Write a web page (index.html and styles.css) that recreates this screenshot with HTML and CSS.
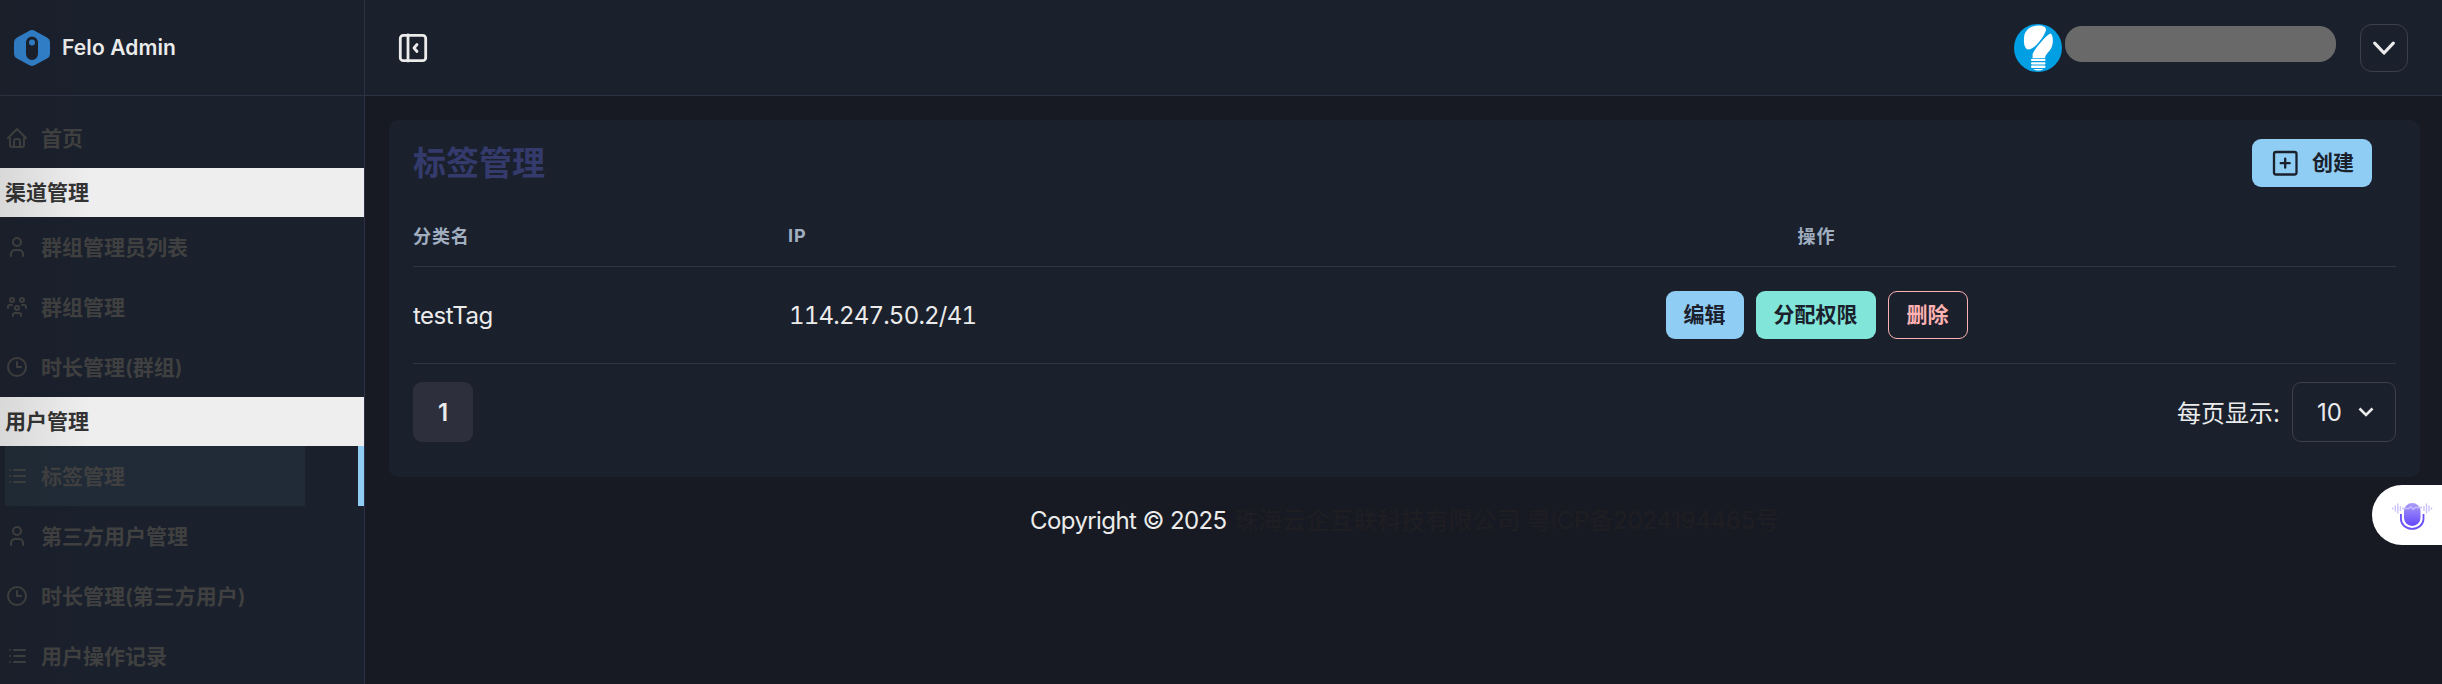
FILE: index.html
```html
<!DOCTYPE html>
<html lang="zh-CN">
<head>
<meta charset="utf-8">
<title>Felo Admin</title>
<link rel="stylesheet" href="styles.css">
</head>
<body>
<svg width="0" height="0" class="defs">
  <symbol id="i-home" viewBox="0 0 24 24"><path d="M5 12H3l9-9 9 9h-2M5 12v7a2 2 0 0 0 2 2h10a2 2 0 0 0 2-2v-7M9 21v-6a2 2 0 0 1 2-2h2a2 2 0 0 1 2 2v6"/></symbol>
  <symbol id="i-user" viewBox="0 0 24 24"><circle cx="12" cy="7" r="4"/><path d="M6 21v-2a4 4 0 0 1 4-4h4a4 4 0 0 1 4 4v2"/></symbol>
  <symbol id="i-users" viewBox="0 0 24 24"><circle cx="12" cy="13" r="2"/><path d="M8 21v-1a2 2 0 0 1 2-2h4a2 2 0 0 1 2 2v1M17 10h2a2 2 0 0 1 2 2v1M3 13v-1a2 2 0 0 1 2-2h2"/><circle cx="17" cy="5" r="2"/><circle cx="7" cy="5" r="2"/></symbol>
  <symbol id="i-clock" viewBox="0 0 24 24"><circle cx="12" cy="12" r="9"/><path d="M12 7v5h4"/></symbol>
  <symbol id="i-list" viewBox="0 0 24 24"><path d="M9 6h11M9 12h11M9 18h11M5 6v.01M5 12v.01M5 18v.01"/></symbol>
</svg>
<div class="app">
  <aside class="sidebar">
    <div class="brand">
      <svg class="logo" viewBox="0 0 36 36"><path fill="#3182ce" fill-rule="evenodd" d="M14.500 1.200Q18-1 21.500 1.200L33 7.500Q36 9.200 36 12V24Q36 26.800 33 28.500L21.500 34.800Q18 37 14.500 34.800L3 28.500Q0 26.800 0 24V12Q0 9.200 3 7.500ZM18 6.500A6 6 0 0 0 12 12.500V24A6 6 0 0 0 24 24V12.500A6 6 0 0 0 18 6.500Z"/><circle cx="18" cy="12.500" r="3" fill="#3182ce"/></svg>
      <span>Felo Admin</span>
    </div>
    <nav class="menu">
      <a class="item"><svg><use href="#i-home"/></svg><span>首页</span></a>
      <div class="section">渠道管理</div>
      <a class="item"><svg><use href="#i-user"/></svg><span>群组管理员列表</span></a>
      <a class="item"><svg><use href="#i-users"/></svg><span>群组管理</span></a>
      <a class="item"><svg><use href="#i-clock"/></svg><span>时长管理(群组)</span></a>
      <div class="section">用户管理</div>
      <a class="item active"><svg><use href="#i-list"/></svg><span>标签管理</span></a>
      <a class="item"><svg><use href="#i-user"/></svg><span>第三方用户管理</span></a>
      <a class="item"><svg><use href="#i-clock"/></svg><span>时长管理(第三方用户)</span></a>
      <a class="item"><svg><use href="#i-list"/></svg><span>用户操作记录</span></a>
    </nav>
    <div class="edge-shade"></div>
  </aside>
  <div class="content">
    <header class="topbar">
      <svg class="toggle" viewBox="0 0 36 36"><rect x="5.300" y="5.300" width="25.400" height="25.400" rx="3"/><path d="M13 5v26M22 14.500L19 18l3 3.500"/></svg>
      <div class="account">
        <svg class="avatar" viewBox="0 0 48 48"><circle cx="24" cy="24" r="24" fill="#009fe3"/><g fill="#fff"><path d="M10 14.500C10 6 17 1.500 24.500 1.500C29.500 1.500 32 3.500 32 5.500C32 10 21 25.500 14.500 25.500C11 25.500 9.500 20 10 14.500Z"/><path d="M36.800 9.500C39.500 12 39.500 20 37 24.500C34.500 28.500 31.500 30.500 31 34H18.500C19 31 17.500 31 20.500 26.500C23 22.500 32.500 10.500 36.800 9.500Z"/><rect x="17" y="34.800" width="14.500" height="2.300" rx="1"/><rect x="17" y="38.200" width="14.500" height="2.300" rx="1"/><rect x="17" y="41.600" width="14.500" height="2.300" rx="1"/><path d="M19 45h10.500q-5 3-10.500 0"/></g></svg>
        <span class="account-name"></span>
        <button class="square"><svg viewBox="0 0 24 24"><path d="M4 7.800l8 8.500 8-8.500"/></svg></button>
      </div>
    </header>
    <main class="main">
      <section class="card">
        <div class="card-head">
          <h1>标签管理</h1>
          <button class="btn blue create"><svg viewBox="0 0 30 30"><rect x="4" y="4" width="22.500" height="22.500" rx="2"/><path d="M15.200 10.700v9M10.700 15.200h9"/></svg>创建</button>
        </div>
        <div class="table">
          <div class="row head"><span>分类名</span><span>IP</span><span class="ops">操作</span></div>
          <div class="row body"><span class="tag">testTag</span><span class="ip">114.247.50.2/41</span>
            <div class="ops"><button class="btn blue w78">编辑</button><button class="btn teal w120">分配权限</button><button class="btn red w80">删除</button></div>
          </div>
        </div>
        <div class="pager">
          <button class="page">1</button>
          <div class="size"><span>每页显示:</span><div class="select"><span>10</span><svg viewBox="0 0 16 12"><path d="M1.500 2.500L8 9l6.500-6.500"/></svg></div></div>
        </div>
      </section>
      <footer class="footer"><span class="copy">Copyright © 2025</span><span class="dim">珠海云企互联科技有限公司 粤ICP备2024194465号</span></footer>
    </main>
  </div>
</div>
<div class="fab">
  <svg viewBox="0 0 42 30">
    <defs><linearGradient id="mic" x1="0" y1="0" x2="0" y2="1"><stop offset="0" stop-color="#a99bf8"/><stop offset="1" stop-color="#6547fb"/></linearGradient></defs>
    <rect x="13" y="2" width="16.500" height="23" rx="8.200" fill="url(#mic)"/>
    <path d="M9.900 13v5a11.200 9.800 0 0 0 22.600 0v-5" fill="none" stroke="#6a4ff7" stroke-width="1.800"/>
    <path d="M1.800 6.500v2M4.300 4.500v6M6.800 2.500v10M9.300 5v5M33 5v5M35.500 2.500v10M38 4.500v6M40.500 6.500v2M11 7.500h7l2-2 2 3 2-2h7" fill="none" stroke="#c9bdfb" stroke-width="1.300"/>
  </svg>
</div>
</body>
</html>
```
FILE: styles.css
```css
* { box-sizing: border-box; }
body { margin: 0; height: 684px; overflow: hidden; background: #181a23; color: #ebebeb; font-family: Inter, "Noto Sans CJK SC", sans-serif; font-size: 24px; }
h1 { margin: 0; }
button { font: inherit; color: inherit; background: none; border: 0; padding: 0; }
.defs { position: absolute; }
.app { display: flex; height: 684px; }

.sidebar { position: relative; width: 365px; flex: none; background: #1a202c; border-right: 1px solid #2d3345; overflow: hidden; }
.brand { height: 96px; border-bottom: 1px solid #2d3345; display: flex; align-items: center; gap: 12px; padding-left: 14px; font-size: 21px; font-weight: 600; letter-spacing: .1px; }
.logo { width: 36px; height: 36px; }
.menu { padding-top: 12px; font-size: 21px; font-weight: 600; }
.item { display: flex; align-items: center; gap: 12px; height: 60px; margin-left: 5px; color: #404040; }
.item span { padding-bottom: 3px; }
.item svg { width: 24px; height: 24px; fill: none; stroke: currentColor; stroke-width: 2; stroke-linecap: round; stroke-linejoin: round; }
.item.active { background: linear-gradient(90deg, #202b37 300px, transparent 300px); border-right: 6px solid #90cdf4; }
.section { height: 49px; line-height: 49px; padding-left: 5px; background: #eee; color: #333; }
.edge-shade { position: absolute; inset: 0 auto 0 0; width: 90px; background: linear-gradient(90deg, rgba(26, 26, 26, .1), transparent); }

.content { flex: 1; min-width: 0; }
.topbar { height: 96px; background: #1a202c; border-bottom: 1px solid #2d3345; display: flex; align-items: center; justify-content: space-between; padding: 0 34px 0 30px; }
.toggle { width: 36px; height: 36px; fill: none; stroke: #ebebeb; stroke-width: 2.8; stroke-linecap: round; stroke-linejoin: round; }
.account { display: flex; align-items: center; }
.avatar { width: 48px; height: 48px; }
.account-name { width: 271px; height: 36px; margin: 0 24px 8px 3px; border-radius: 17px; background: #696969; }
.square { width: 48px; height: 48px; border: 1px solid #3c404a; border-radius: 12px; display: grid; place-items: center; }
.square svg { width: 28px; height: 28px; fill: none; stroke: #ebebeb; stroke-width: 2.7; stroke-linecap: round; stroke-linejoin: round; }

.main { padding: 24px 22px 0 24px; }
.card { height: 357px; border-radius: 9px; background: #1a202c; padding: 0 24px; }
.card-head { display: flex; justify-content: space-between; align-items: center; padding: 19px 24px 19px 0; }
.card-head h1 { font-size: 33px; line-height: 48px; font-weight: 600; color: #343b6c; }
.btn { height: 48px; border-radius: 9px; font-size: 21px; line-height: 46px; font-weight: 600; color: #1a202c; text-align: center; }
.blue { background: #90cdf4; }
.teal { background: #81e6d9; }
.red { border: 1px solid #feb2b2; color: #feb2b2; }
.w78 { width: 78px; }
.w120 { width: 120px; }
.w80 { width: 80px; }
.create { width: 120px; display: flex; align-items: center; justify-content: center; gap: 12px; }
.create svg { width: 30px; height: 30px; fill: none; stroke: #1a202c; stroke-width: 2.3; stroke-linecap: round; }

.row { display: grid; grid-template-columns: 375px 449px 1fr; align-items: center; border-bottom: 1px solid #2d3748; }
.head { height: 61px; padding-bottom: 2px; font-size: 18px; font-weight: 700; letter-spacing: .9px; color: #a0aec0; }
.head .ops { text-align: center; }
.body { height: 97px; }
.body .ops { display: flex; justify-content: center; gap: 12px; }
.tag { letter-spacing: -.5px; }
.ip { padding-left: 1px; font-variant-numeric: tabular-nums; letter-spacing: -.8px; }

.pager { display: flex; justify-content: space-between; align-items: center; padding-top: 18px; }
.page { width: 60px; height: 60px; border-radius: 9px; background: #2d303c; font-weight: 600; }
.size { display: flex; align-items: center; gap: 12px; }
.size > span { padding-bottom: 2px; }
.select { width: 104px; height: 60px; border: 1px solid #3c404a; border-radius: 9px; display: flex; align-items: center; justify-content: space-between; padding: 0 21px 0 24px; }
.select svg { width: 16px; height: 12px; fill: none; stroke: #ebebeb; stroke-width: 2.6; }
.footer { display: flex; justify-content: center; gap: 8px; margin-top: 27px; line-height: 34px; }
.copy { letter-spacing: -.6px; }
.dim { color: #1f1e22; letter-spacing: -.2px; }

.fab { position: absolute; right: 0; top: 485px; width: 70px; height: 60px; border-radius: 30px 0 0 30px; background: #fff; }
.fab svg { display: block; width: 42px; height: 30px; margin: 16px 0 0 19px; }
```
